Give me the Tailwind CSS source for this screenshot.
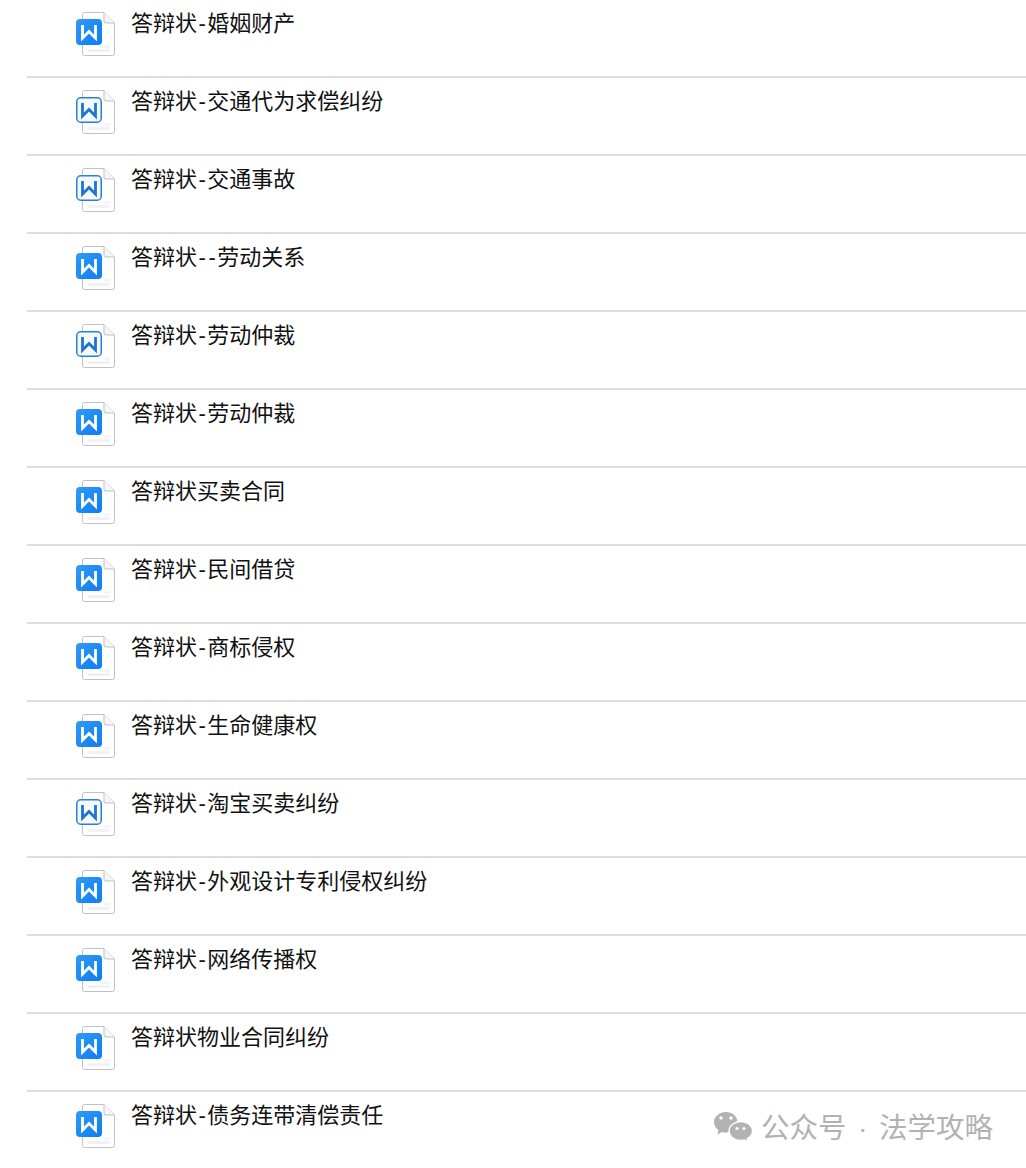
<!doctype html>
<html lang="zh">
<head>
<meta charset="utf-8">
<script src="https://cdn.jsdelivr.net/npm/@tailwindcss/browser@4"></script>
</head>
<body class="bg-white">
<svg class="absolute w-0 h-0" width="0" height="0">
<defs>
<linearGradient id="blue" x1="0" y1="0" x2="1" y2="1"><stop offset="0" stop-color="#2f9bf8"/><stop offset="1" stop-color="#0f7bf0"/></linearGradient>
<symbol id="file" viewBox="0 0 40 44">
<path d="M8.500 .5H28L38.500 11V41.500a2 2 0 0 1-2 2H8.500a2 2 0 0 1-2-2V2.500a2 2 0 0 1 2-2Z" fill="#fff" stroke="#bfc1c5"/>
<path d="M28 .5V9a2 2 0 0 0 2 2h8.500" fill="#f5f6f8" stroke="#bfc1c5"/>
<path d="M12 37h22v3H12z" fill="#f0f2f6"/>
<path d="M28 33h6v3h-6z" fill="#f3f5f8"/>
</symbol>
<symbol id="solid" viewBox="0 0 40 44">
<use href="#file"/>
<rect y="7" width="26" height="26" rx="4" fill="url(#blue)"/>
<path d="M6.500 13V26L13 19.500 19.500 26V13" fill="none" stroke="#fff" stroke-width="2.800" stroke-linejoin="miter"/>
</symbol>
<symbol id="outline" viewBox="0 0 40 44">
<use href="#file"/>
<rect x=".75" y="7.750" width="24.500" height="24.500" rx="4" fill="#f4f9fe" stroke="#2a7fd6" stroke-width="1.500"/>
<path d="M6.500 13V26L13 19.500 19.500 26V13" fill="none" stroke="#1f74d0" stroke-width="2.800"/>
</symbol>
</defs>
</svg>
<main class="relative w-[1026px] h-[1168px] overflow-hidden font-['Liberation_Sans','Noto_Sans_CJK_SC',sans-serif] text-[22px] leading-[24px] text-[#111]">
<ul class="ml-[27px]">
<li class="h-[78px] border-b-2 border-[#dcdcdc] flex gap-[15px] pl-[49px] pt-[12px]"><svg class="w-[40px] h-[44px] shrink-0"><use href="#solid"/></svg><span>答辩状<span class="px-[1.4px]">-</span>婚姻财产</span></li>
<li class="h-[78px] border-b-2 border-[#dcdcdc] flex gap-[15px] pl-[49px] pt-[12px]"><svg class="w-[40px] h-[44px] shrink-0"><use href="#outline"/></svg><span>答辩状<span class="px-[1.4px]">-</span>交通代为求偿纠纷</span></li>
<li class="h-[78px] border-b-2 border-[#dcdcdc] flex gap-[15px] pl-[49px] pt-[12px]"><svg class="w-[40px] h-[44px] shrink-0"><use href="#outline"/></svg><span>答辩状<span class="px-[1.4px]">-</span>交通事故</span></li>
<li class="h-[78px] border-b-2 border-[#dcdcdc] flex gap-[15px] pl-[49px] pt-[12px]"><svg class="w-[40px] h-[44px] shrink-0"><use href="#solid"/></svg><span>答辩状<span class="px-[1.4px]">-</span><span class="px-[1.4px]">-</span>劳动关系</span></li>
<li class="h-[78px] border-b-2 border-[#dcdcdc] flex gap-[15px] pl-[49px] pt-[12px]"><svg class="w-[40px] h-[44px] shrink-0"><use href="#outline"/></svg><span>答辩状<span class="px-[1.4px]">-</span>劳动仲裁</span></li>
<li class="h-[78px] border-b-2 border-[#dcdcdc] flex gap-[15px] pl-[49px] pt-[12px]"><svg class="w-[40px] h-[44px] shrink-0"><use href="#solid"/></svg><span>答辩状<span class="px-[1.4px]">-</span>劳动仲裁</span></li>
<li class="h-[78px] border-b-2 border-[#dcdcdc] flex gap-[15px] pl-[49px] pt-[12px]"><svg class="w-[40px] h-[44px] shrink-0"><use href="#solid"/></svg><span>答辩状买卖合同</span></li>
<li class="h-[78px] border-b-2 border-[#dcdcdc] flex gap-[15px] pl-[49px] pt-[12px]"><svg class="w-[40px] h-[44px] shrink-0"><use href="#solid"/></svg><span>答辩状<span class="px-[1.4px]">-</span>民间借贷</span></li>
<li class="h-[78px] border-b-2 border-[#dcdcdc] flex gap-[15px] pl-[49px] pt-[12px]"><svg class="w-[40px] h-[44px] shrink-0"><use href="#solid"/></svg><span>答辩状<span class="px-[1.4px]">-</span>商标侵权</span></li>
<li class="h-[78px] border-b-2 border-[#dcdcdc] flex gap-[15px] pl-[49px] pt-[12px]"><svg class="w-[40px] h-[44px] shrink-0"><use href="#solid"/></svg><span>答辩状<span class="px-[1.4px]">-</span>生命健康权</span></li>
<li class="h-[78px] border-b-2 border-[#dcdcdc] flex gap-[15px] pl-[49px] pt-[12px]"><svg class="w-[40px] h-[44px] shrink-0"><use href="#outline"/></svg><span>答辩状<span class="px-[1.4px]">-</span>淘宝买卖纠纷</span></li>
<li class="h-[78px] border-b-2 border-[#dcdcdc] flex gap-[15px] pl-[49px] pt-[12px]"><svg class="w-[40px] h-[44px] shrink-0"><use href="#solid"/></svg><span>答辩状<span class="px-[1.4px]">-</span>外观设计专利侵权纠纷</span></li>
<li class="h-[78px] border-b-2 border-[#dcdcdc] flex gap-[15px] pl-[49px] pt-[12px]"><svg class="w-[40px] h-[44px] shrink-0"><use href="#solid"/></svg><span>答辩状<span class="px-[1.4px]">-</span>网络传播权</span></li>
<li class="h-[78px] border-b-2 border-[#dcdcdc] flex gap-[15px] pl-[49px] pt-[12px]"><svg class="w-[40px] h-[44px] shrink-0"><use href="#solid"/></svg><span>答辩状物业合同纠纷</span></li>
<li class="h-[78px] flex gap-[15px] pl-[49px] pt-[12px]"><svg class="w-[40px] h-[44px] shrink-0"><use href="#solid"/></svg><span>答辩状<span class="px-[1.4px]">-</span>债务连带清偿责任</span></li>
</ul>
<div class="absolute left-[713px] top-[1111px] flex items-center gap-[8px] text-[#b2b2b2] text-[28.500px] leading-[34px]">
<svg class="w-[40px] h-[34px]" viewBox="0 0 40 34" fill="#b2b2b2">
<path d="M13 1C6.500 1 1 5.500 1 11c0 3.300 1.700 6 4.300 8L4.500 23.500 9 21c1.300.4 2.700.6 4 .6 6 0 11-3 11.500-10.500C24.500 5.500 19.500 1 13 1Z"/>
<path d="M39.500 20c0-5.300-5.200-9.500-11.500-9.500S16 14.700 16 20s5.200 9.500 12 9.500c1.300 0 2.500-.2 3.600-.5l3.500 2-.8-3.300C37.700 26 39.500 23.200 39.500 20Z" stroke="#fff" stroke-width="1.400"/>
<circle cx="8" cy="7" r="1.700" fill="#fff"/><circle cx="18" cy="7" r="1.700" fill="#fff"/>
<circle cx="24" cy="17.500" r="1.500" fill="#fff"/><circle cx="31" cy="17.500" r="1.500" fill="#fff"/>
</svg>
<span class="whitespace-nowrap">公众号<span class="px-[11.500px]">·</span>法学攻略</span>
</div>
</main>
</body>
</html>
